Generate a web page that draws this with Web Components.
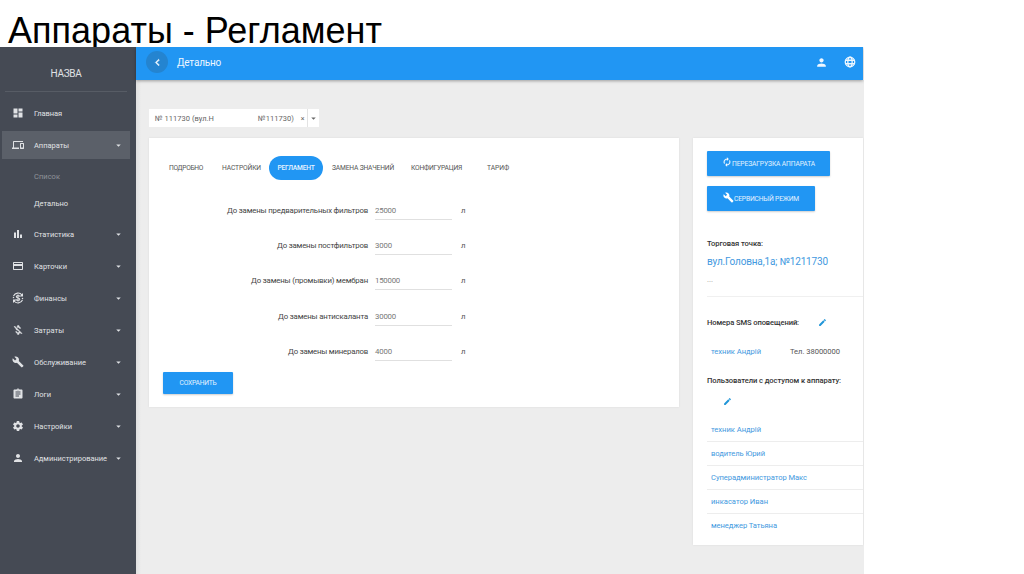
<!DOCTYPE html>
<html lang="ru">
<head>
<meta charset="utf-8">
<title>Аппараты - Регламент</title>
<style>
    body {
        margin: 0;
        width: 1024px;
        height: 574px;
        overflow: hidden;
        background: #fff;
        font-family: Roboto, "Liberation Sans", sans-serif;
        font-size: 7.500px;
        color: #555;
    }
</style>
</head>
<body>
<slide-page>
    <fit-label slot="title" width="374">Аппараты - Регламент</fit-label>
    <side-bar>
        <fit-label slot="brand" width="31">НАЗВА</fit-label>
        <nav-item icon="dashboard"><fit-label width="28">Главная</fit-label></nav-item>
        <nav-item icon="devices" active arrow><fit-label width="35">Аппараты</fit-label></nav-item>
        <nav-sub muted><fit-label width="26">Список</fit-label></nav-sub>
        <nav-sub><fit-label width="34">Детально</fit-label></nav-sub>
        <nav-item icon="chart" arrow><fit-label width="40">Статистика</fit-label></nav-item>
        <nav-item icon="card" arrow><fit-label width="33">Карточки</fit-label></nav-item>
        <nav-item icon="finance" arrow><fit-label width="33">Финансы</fit-label></nav-item>
        <nav-item icon="moneyoff" arrow><fit-label width="30">Затраты</fit-label></nav-item>
        <nav-item icon="wrench" arrow><fit-label width="52">Обслуживание</fit-label></nav-item>
        <nav-item icon="clipboard" arrow><fit-label width="17">Логи</fit-label></nav-item>
        <nav-item icon="gear" arrow><fit-label width="38">Настройки</fit-label></nav-item>
        <nav-item icon="person" arrow><fit-label width="73">Администрирование</fit-label></nav-item>
    </side-bar>
    <top-bar><fit-label width="44">Детально</fit-label></top-bar>
    <device-select>
        <fit-label width="59">№ 111730 (вул.Н</fit-label>
        <fit-label slot="end" width="36">№111730)</fit-label>
    </device-select>
    <settings-card></settings-card>
    <device-panel></device-panel>
</slide-page>

<script>
const icons = {
    dashboard: '<path d="M3 13h8V3H3v10zm0 8h8v-6H3v6zm10 0h8V11h-8v10zm0-18v6h8V3h-8z"/>',
    devices: '<path d="M4 6h18V4H4c-1.100 0-2 .9-2 2v11H0v3h14v-3H4V6zm19 2h-6c-.55 0-1 .45-1 1v10c0 .55.45 1 1 1h6c.55 0 1-.45 1-1V9c0-.55-.45-1-1-1zm-1 9h-4v-7h4v7z"/>',
    chart: '<path d="M4 9h4v11H4zM10 4h4v16h-4zM16 13h4v7h-4z"/>',
    card: '<path d="M20 4H4c-1.110 0-1.990.89-1.990 2L2 18c0 1.110.89 2 2 2h16c1.110 0 2-.89 2-2V6c0-1.110-.89-2-2-2zm0 14H4v-6h16v6zm0-10H4V6h16v2z"/>',
    finance: '<g fill="none" stroke="currentColor" stroke-width="2.200"><path d="M3 8A10 10 0 0 1 20 6M21 16A10 10 0 0 1 4 18"/><path d="M15.500 9c-.5-1.500-2-2-3.500-2-2 0-3.400.9-3.400 2.500 0 3.500 7 1.500 7 5 0 1.600-1.500 2.500-3.500 2.500-1.800 0-3.300-.7-3.700-2.300M12 5v14"/></g><path d="M22 2v7h-7zM2 22v-7h7z"/><circle cx="3" cy="11" r="1.500"/><circle cx="21" cy="13" r="1.500"/>',
    moneyoff: '<path d="M12.500 6.900c1.780 0 2.440.85 2.500 2.100h2.210c-.07-1.720-1.120-3.300-3.210-3.810V3h-3v2.160c-.53.12-1.030.3-1.480.54l1.470 1.470c.41-.17.91-.27 1.510-.27zM5.330 4.060L4.060 5.330 7.500 8.770c0 2.080 1.560 3.210 3.910 3.910l3.510 3.510c-.34.48-1.050.91-2.420.91-2.060 0-2.870-.92-2.980-2.100h-2.200c.12 2.190 1.760 3.420 3.680 3.830V21h3v-2.150c.96-.18 1.820-.55 2.450-1.120l2.220 2.220 1.270-1.270L5.330 4.060z" stroke="currentColor" stroke-width=".8"/>',
    wrench: '<path d="M22.700 19l-9.100-9.100c.9-2.300.4-5-1.500-6.900-2-2-5-2.400-7.400-1.300L9 6 6 9 1.600 4.700C.4 7.100.9 10.100 2.900 12.100c1.900 1.900 4.600 2.400 6.900 1.500l9.100 9.100c.4.4 1 .4 1.400 0l2.300-2.300c.5-.4.5-1.100.1-1.400z"/>',
    clipboard: '<path d="M19 3h-4.180C14.400 1.840 13.300 1 12 1c-1.300 0-2.400.84-2.820 2H5c-1.100 0-2 .9-2 2v14c0 1.100.9 2 2 2h14c1.100 0 2-.9 2-2V5c0-1.100-.9-2-2-2zm-7 0c.55 0 1 .45 1 1s-.45 1-1 1-1-.45-1-1 .45-1 1-1zm2 14H7v-2h7v2zm3-4H7v-2h10v2zm0-4H7V7h10v2z"/>',
    gear: '<path d="M19.430 12.980c.04-.32.07-.64.07-.98s-.03-.66-.07-.98l2.110-1.650c.19-.15.24-.42.12-.64l-2-3.460c-.12-.22-.39-.3-.61-.22l-2.490 1c-.52-.4-1.080-.73-1.690-.98l-.38-2.650C14.460 2.180 14.250 2 14 2h-4c-.25 0-.46.18-.49.42l-.38 2.650c-.61.25-1.170.59-1.690.98l-2.490-1c-.23-.09-.49 0-.61.22l-2 3.460c-.13.22-.07.49.12.64l2.110 1.650c-.04.32-.07.65-.07.98s.03.66.07.98l-2.110 1.650c-.19.15-.24.42-.12.64l2 3.460c.12.22.39.3.61.22l2.490-1c.52.4 1.080.73 1.690.98l.38 2.650c.03.24.24.42.49.42h4c.25 0 .46-.18.49-.42l.38-2.650c.61-.25 1.170-.59 1.690-.98l2.490 1c.23.09.49 0 .61-.22l2-3.460c.12-.22.07-.49-.12-.64l-2.110-1.650zM12 15.500c-1.930 0-3.500-1.570-3.500-3.500s1.570-3.500 3.500-3.500 3.500 1.570 3.500 3.500-1.570 3.500-3.500 3.500z"/>',
    person: '<path d="M12 12c2.210 0 4-1.790 4-4s-1.790-4-4-4-4 1.790-4 4 1.790 4 4 4zm0 2c-2.670 0-8 1.340-8 4v2h16v-2c0-2.660-5.330-4-8-4z"/>',
    globe: '<g fill="none" stroke="currentColor" stroke-width="2.600"><circle cx="12" cy="12" r="9.500"/><ellipse cx="12" cy="12" rx="4.300" ry="9.500"/><path d="M3 8.500h18M3 15.500h18"/></g>',
    back: '<path d="M15.410 7.410L14 6l-6 6 6 6 1.410-1.410L10.830 12z" stroke="currentColor"/>',
    refresh: '<path d="M12 6v3l4-4-4-4v3c-4.420 0-8 3.580-8 8 0 1.570.46 3.030 1.240 4.260L6.700 14.800c-.45-.83-.7-1.790-.7-2.800 0-3.310 2.690-6 6-6zm6.760 1.740L17.300 9.200c.44.84.7 1.790.7 2.800 0 3.310-2.690 6-6 6v-3l-4 4 4 4v-3c4.420 0 8-3.580 8-8 0-1.570-.46-3.030-1.240-4.260z" stroke="currentColor" stroke-width=".5"/>',
    pencil: '<path d="M3 17.250V21h3.750L17.810 9.940l-3.750-3.750L3 17.250zM20.710 7.040c.39-.39.39-1.020 0-1.410l-2.340-2.340c-.39-.39-1.020-.39-1.410 0l-1.830 1.830 3.750 3.750 1.830-1.830z"/>',
    arrow: '<path d="M6 9.500l6 6 6-6z"/>'
};

function render(el, html) {
    const template = document.createElement('template');
    template.innerHTML = html;
    el.attachShadow({ mode: 'open' }).appendChild(template.content.cloneNode(true));
}

class AppIcon extends HTMLElement {
    constructor() {
        super();
        const size = this.getAttribute('size') || 12;
        render(this, `
            <style>
                :host { display: block; flex: none; width: ${size}px; height: ${size}px; }
                svg { display: block; width: 100%; height: 100%; fill: currentColor; }
            </style>
            <svg viewBox="0 0 24 24">${icons[this.getAttribute('name')]}</svg>
        `);
    }
}

class SlidePage extends HTMLElement {
    constructor() {
        super();
        render(this, `
            <style>
                :host { display: block; }
                h1 {
                    margin: 0;
                    height: 47px;
                    padding-left: 8px;
                    box-sizing: border-box;
                    overflow: hidden;
                    font: 36px/62px "Liberation Sans", Arial, sans-serif;
                    color: #000;
                }
                .app {
                    display: grid;
                    grid-template: 33px 494px / 136px 728px;
                    grid-template-areas: "side top" "side main";
                    width: 864px;
                    height: 527px;
                    overflow: hidden;
                }
                ::slotted(side-bar) { grid-area: side; }
                ::slotted(top-bar) { grid-area: top; }
                slot[name] { display: contents; }
            </style>
            <h1><slot name="title"></slot></h1>
            <div class="app"><slot></slot></div>
        `);
        // the select, the card and the panel share the main grid cell
        const main = document.createElement('main-area');
        this.querySelectorAll(':scope > device-select, :scope > settings-card, :scope > device-panel')
            .forEach(el => main.appendChild(el));
        this.appendChild(main);
    }
}

class MainArea extends HTMLElement {
    constructor() {
        super();
        render(this, `
            <style>
                :host {
                    grid-area: main;
                    display: grid;
                    grid-template-columns: 530px 170px;
                    grid-template-rows: 18px auto;
                    column-gap: 14px;
                    row-gap: 11px;
                    align-content: start;
                    align-items: start;
                    padding: 29px 1px 0 13px;
                    background: linear-gradient(90deg, #e0e0e0, #ededed 5px);
                }
                ::slotted(device-select) { grid-column: 1; }
                ::slotted(settings-card) { grid-column: 1; grid-row: 2; }
                ::slotted(device-panel) { grid-column: 2; grid-row: 2; }
            </style>
            <slot></slot>
        `);
    }
}

class SideBar extends HTMLElement {
    constructor() {
        super();
        render(this, `
            <style>
                :host { display: block; background: #454a54; color: #e0e2e5; }
                .brand {
                    height: 44px;
                    margin: 0 9px 5px 5px;
                    border-bottom: 1px solid #575c65;
                    line-height: 53px;
                    font-size: 10px;
                    text-align: center;
                }
            </style>
            <div class="brand"><slot name="brand"></slot></div>
            <slot></slot>
        `);
    }
}

class NavItem extends HTMLElement {
    constructor() {
        super();
        render(this, `
            <style>
                :host { display: flex; align-items: center; height: 32px; }
                .row {
                    display: flex;
                    align-items: center;
                    flex: 1;
                    height: 28px;
                    margin: 0 6px 0 2px;
                    padding: 0 7px 0 10px;
                }
                :host([active]) .row { background: #5b6069; }
                .text { flex: 1; margin-left: 10px; white-space: nowrap; }
            </style>
            <div class="row">
                <app-icon name="${this.getAttribute('icon')}"></app-icon>
                <span class="text"><slot></slot></span>
                ${this.hasAttribute('arrow') ? '<app-icon name="arrow" size="9"></app-icon>' : ''}
            </div>
        `);
    }
}

class NavSub extends HTMLElement {
    constructor() {
        super();
        render(this, `
            <style>
                :host { display: block; height: 28px; line-height: 30px; padding-left: 34px; }
                :host([muted]) { height: 27px; padding-top: 1px; color: #8f939a; }
                :host(:not([muted])) { height: 29px; }
            </style>
            <slot></slot>
        `);
    }
}

class TopBar extends HTMLElement {
    constructor() {
        super();
        render(this, `
            <style>
                :host {
                    display: flex;
                    align-items: center;
                    box-sizing: border-box;
                    height: 33px;
                    padding: 0 8px 3px 10px;
                    background: #2196f3;
                    box-shadow: 0 1px 3px rgba(0,0,0,0.35);
                    color: #eef7ff;
                    font-size: 10px;
                    margin-right: 1px;
                    z-index: 1;
                }
                .back {
                    display: flex;
                    align-items: center;
                    justify-content: center;
                    width: 22px;
                    height: 22px;
                    margin-right: 9px;
                    border-radius: 50%;
                    background: #2484d0;
                }
                .title { flex: 1; }
                .globe { margin-left: 16px; margin-right: -1px; }
            </style>
            <div class="back"><app-icon name="back" size="13"></app-icon></div>
            <div class="title"><slot></slot></div>
            <app-icon name="person" size="13"></app-icon>
            <app-icon class="globe" name="globe" size="12"></app-icon>
        `);
    }
}

class DeviceSelect extends HTMLElement {
    constructor() {
        super();
        render(this, `
            <style>
                :host {
                    display: flex;
                    align-items: center;
                    width: 170px;
                    height: 18px;
                    background: #fff;
                    white-space: nowrap;
                    color: #666;
                }
                .start { flex: 1; padding-left: 6px; }
                .clear { width: 13px; text-align: center; font-size: 7px; padding-left: 4px; padding-top: 2px; box-sizing: border-box; }
                .drop { display: flex; align-items: center; justify-content: center; width: 11px; height: 18px; border-left: 1px solid #e3e3e3; }
            </style>
            <div class="start"><slot></slot></div>
            <slot name="end"></slot>
            <span class="clear">×</span>
            <span class="drop"><app-icon name="arrow" size="9"></app-icon></span>
        `);
    }
}

class BlueButton extends HTMLElement {
    constructor() {
        super();
        const icon = this.getAttribute('icon');
        render(this, `
            <style>
                :host {
                    display: flex;
                    align-items: center;
                    justify-content: center;
                    box-sizing: border-box;
                    border-radius: 1px;
                    background: #2196f3;
                    box-shadow: 0 1px 2px rgba(0,0,0,0.2);
                    color: #e3f2fe;
                    font-size: 6.700px;
                    white-space: nowrap;
                }
                app-icon { color: #fff; margin-bottom: 3px; }
                .text { padding-top: 1px; }
            </style>
            ${icon ? `<app-icon name="${icon}" size="${this.getAttribute('icon-size')}"></app-icon>` : ''}
            <span class="text"><slot></slot></span>
        `);
    }
}

const tabs = [
    { text: 'ПОДРОБНО', width: 34, gap: 0 },
    { text: 'НАСТРОЙКИ', width: 39, gap: 19 },
    { text: 'РЕГЛАМЕНТ', width: 37, gap: 8, active: true },
    { text: 'ЗАМЕНА ЗНАЧЕНИЙ', width: 62, gap: 9 },
    { text: 'КОНФИГУРАЦИЯ', width: 51, gap: 17 },
    { text: 'ТАРИФ', width: 22, gap: 25 }
];

const limits = [
    { label: 'До замены предварительных фильтров', width: 141, value: '25000', valueWidth: 21 },
    { label: 'До замены постфильтров', width: 91, value: '3000', valueWidth: 17 },
    { label: 'До замены (промывки) мембран', width: 117, value: '150000', valueWidth: 25 },
    { label: 'До замены антискаланта', width: 90, value: '30000', valueWidth: 21 },
    { label: 'До замены минералов', width: 80, value: '4000', valueWidth: 17 }
];

class SettingsCard extends HTMLElement {
    constructor() {
        super();
        render(this, `
            <style>
                :host {
                    display: block;
                    box-sizing: border-box;
                    height: 269px;
                    padding: 18px 14px 0;
                    background: #fff;
                    box-shadow: 0 0 2px rgba(0,0,0,0.08);
                    color: #555;
                }
                .tabs { display: flex; align-items: center; height: 24px; padding-left: 6px; font-size: 6.700px; }
                .active {
                    display: flex;
                    align-items: center;
                    justify-content: center;
                    width: 54px;
                    height: 24px;
                    border-radius: 12px;
                    background: #2196f3;
                    color: #e8f4ff;
                    font-weight: 500;
                }
                .rows { padding-top: 13px; font-size: 7.800px; }
                .row { display: flex; align-items: flex-start; height: 35.200px; line-height: 36px; }
                .label { width: 205px; text-align: right; color: #444; }
                .value { width: 77px; height: 26px; margin: 0 9px 0 7px; border-bottom: 1px solid #e0e0e0; color: #777; }
                .save { width: 70px; height: 22px; margin-top: 3px; }
            </style>
            <div class="tabs">
                ${tabs.map(tab => `<div class="${tab.active ? 'active' : ''}" style="margin-left:${tab.gap}px"><fit-label width="${tab.width}">${tab.text}</fit-label></div>`).join('')}
            </div>
            <div class="rows">
                ${limits.map(row => `
                    <div class="row">
                        <div class="label"><fit-label width="${row.width}">${row.label}</fit-label></div>
                        <div class="value"><fit-label width="${row.valueWidth}">${row.value}</fit-label></div>
                        <div>л</div>
                    </div>`).join('')}
            </div>
            <blue-button class="save"><fit-label width="37">СОХРАНИТЬ</fit-label></blue-button>
        `);
    }
}

const users = [
    { name: 'техник Андрій', width: 50 },
    { name: 'водитель Юрий', width: 54 },
    { name: 'Суперадминистратор Макс', width: 96 },
    { name: 'инкасатор Иван', width: 57 },
    { name: 'менеджер Татьяна', width: 66 }
];

class DevicePanel extends HTMLElement {
    constructor() {
        super();
        render(this, `
            <style>
                :host {
                    display: block;
                    box-sizing: border-box;
                    height: 407px;
                    padding: 13px 0 0 14px;
                    background: #fff;
                    box-shadow: 0 0 2px rgba(0,0,0,0.08);
                    font-size: 7.600px;
                }
                blue-button { height: 25px; }
                .reload { width: 123px; margin-bottom: 10px; }
                .service { width: 108px; margin-bottom: 24px; }
                b { font-weight: 500; color: #333; }
                .line { display: flex; align-items: center; height: 16px; }
                .link { color: #4299e0; }
                .address { height: 20px; font-size: 10px; }
                .dots { height: 26px; padding-bottom: 8px; box-sizing: border-box; color: #999; border-bottom: 1px solid #f0f0f0; }
                .sms { margin-top: 17px; color: #2196d8; gap: 19px; }
                .phone { margin: 13px 0 13px 4px; gap: 29px; }
                .phone span:last-child { color: #555; }
                .edit { height: 27px; margin-bottom: 3.500px; padding-left: 16px; color: #2196d8; }
                .user { height: 22.800px; padding-left: 4px; border-bottom: 1px solid #ededed; }
                .user:last-child { border: 0; }
            </style>
            <blue-button class="reload" icon="refresh" icon-size="10"><fit-label width="83">ПЕРЕЗАГРУЗКА АППАРАТА</fit-label></blue-button>
            <blue-button class="service" icon="wrench" icon-size="11"><fit-label width="65">СЕРВИСНЫЙ РЕЖИМ</fit-label></blue-button>
            <div class="line"><b><fit-label width="56">Торговая точка:</fit-label></b></div>
            <div class="line link address"><fit-label width="121">вул.Головна,1а; №1211730</fit-label></div>
            <div class="line dots">...</div>
            <div class="line sms"><b><fit-label width="92">Номера SMS оповещений:</fit-label></b><app-icon name="pencil" size="9"></app-icon></div>
            <div class="line phone"><span class="link"><fit-label width="50">техник Андрій</fit-label></span><span><fit-label width="50">Тел. 38000000</fit-label></span></div>
            <div class="line"><b><fit-label width="134">Пользователи с доступом к аппарату:</fit-label></b></div>
            <div class="line edit"><app-icon name="pencil" size="9"></app-icon></div>
            <div>
                ${users.map(user => `<div class="line user link"><fit-label width="${user.width}">${user.name}</fit-label></div>`).join('')}
            </div>
        `);
    }
}

// One-line label that tracks its letters so the text fills the given width.
class FitLabel extends HTMLElement {
    constructor() {
        super();
        render(this, '<style>:host { display: inline-block; white-space: nowrap; }</style><slot></slot>');
    }

    connectedCallback() {
        const text = this.textContent;
        const width = Number(this.getAttribute('width'));
        const range = document.createRange();
        range.selectNodeContents(this);
        const natural = range.getBoundingClientRect().width;
        if (!natural || this.style.letterSpacing) return;
        this.style.letterSpacing = `${(width - natural) / text.length}px`;
    }
}

customElements.define('app-icon', AppIcon);
customElements.define('main-area', MainArea);
customElements.define('slide-page', SlidePage);
customElements.define('side-bar', SideBar);
customElements.define('nav-item', NavItem);
customElements.define('nav-sub', NavSub);
customElements.define('top-bar', TopBar);
customElements.define('device-select', DeviceSelect);
customElements.define('blue-button', BlueButton);
customElements.define('settings-card', SettingsCard);
customElements.define('device-panel', DevicePanel);
customElements.define('fit-label', FitLabel);
</script>
</body>
</html>
